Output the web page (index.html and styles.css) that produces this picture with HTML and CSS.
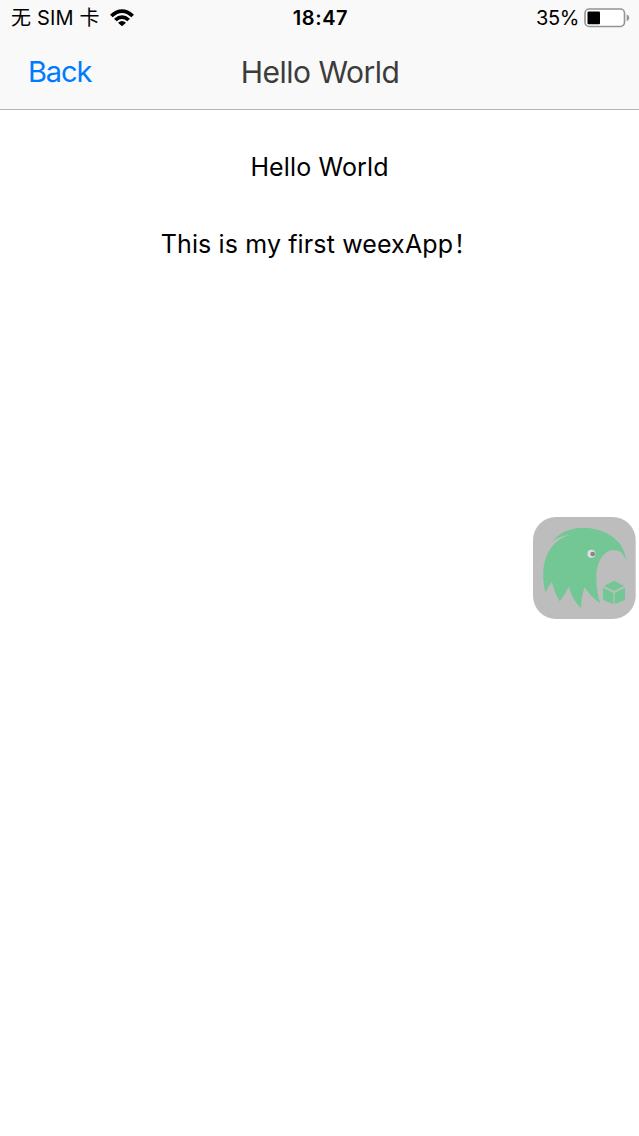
FILE: index.html
```html
<!DOCTYPE html>
<html lang="zh-CN">
<head>
<meta charset="utf-8">
<title>Hello World</title>
<link rel="stylesheet" href="styles.css">
</head>
<body>
<header class="header">
  <div class="status">
    <div class="status-left">
      <span class="carrier">无 SIM 卡</span>
      <svg class="wifi" viewBox="0 0 72 52">
        <path d="M0 17Q36-15 72 17L64 25Q36-1 8 25Z"/>
        <path d="M12 29Q36 8 60 29L52 37Q36 23 20 37Z"/>
        <path d="M24 41Q36 31 48 41L36 52Z"/>
      </svg>
    </div>
    <span class="clock">18:47</span>
    <div class="status-right">
      <span class="percent">35%</span>
      <svg class="battery" viewBox="0 0 46 20">
        <rect x="1" y="1" width="39.5" height="17.5" rx="4.2" fill="#fff" stroke="#939393" stroke-width="1.6"/>
        <rect x="3.5" y="3.5" width="12.5" height="12.8" rx="1" fill="#000"/>
        <path d="M42.7 6.4Q45.3 7.4 45.3 9.8T42.7 13.2Z" fill="#939393"/>
      </svg>
    </div>
  </div>
  <nav class="nav">
    <a class="back">Back</a>
    <h1 class="title">Hello World</h1>
  </nav>
</header>
<main class="content">
  <p class="greeting">Hello World</p>
  <p class="message">This is my first weexApp<span class="mark">！</span></p>
</main>
<svg class="float-button" viewBox="24 21 308 306">
  <rect x="24" y="21" width="308" height="306" rx="69" fill="#bdbdbd"/>
  <path fill="#72c795" d="M82 94Q101 69 134 60C171 47 224 54 260 79C284 96 301 120 302 149C294 128 283 120 266 120C231 122 212 164 214 207Q215 246 225 279Q197 261 179 232Q168 261 168 295Q143 270 131 230Q120 255 104 274Q89 250 81 215Q70 231 61 247C54 218 51 178 61 148C73 109 101 84 135 75Q107 76 82 94Z"/>
  <circle cx="199" cy="131" r="12" fill="#dedede"/>
  <circle cx="203" cy="132" r="7" fill="#858585"/>
  <path fill="#72c795" d="M267 212L297 228L267 243L237 228ZM234 233L265 248V283L237 271Q234 269 234 266ZM300 233V266Q300 269 297 271L269 283V248Z"/>
</svg>
</body>
</html>
```
FILE: styles.css
```css
* { box-sizing: border-box; }
body {
  margin: 0;
  min-height: 1136px;
  background: #fff;
  color: #000;
  font-family: Inter, "Noto Sans CJK SC", sans-serif;
}
.header {
  height: 110px;
  background: #f9f9f9;
  border-bottom: 1px solid #b5b5b5;
}
.status {
  display: grid;
  grid-template-columns: 1fr auto 1fr;
  align-items: center;
  height: 35px;
  padding: 0 9px 0 11px;
  font-size: 20px;
  line-height: 34px;
  white-space: nowrap;
}
.status-left, .status-right { display: flex; align-items: center; }
.status-left { gap: 10px; }
.status-right { justify-content: flex-end; gap: 5px; }
.carrier { padding-top: 1px; letter-spacing: 0.15px; }
.percent { padding-top: 1px; letter-spacing: -0.4px; }
.wifi { width: 24px; height: 17.3px; }
.clock { padding-top: 1px; font-weight: 600; letter-spacing: 0.6px; }
.battery { width: 46px; height: 20px; }
.nav {
  display: grid;
  grid-template-columns: 1fr auto 1fr;
  align-items: center;
  height: 74px;
  padding: 0 27px 0 28px;
}
.back {
  padding-bottom: 2px;
  color: #007aff;
  font-size: 29px;
  letter-spacing: -1.1px;
}
.title {
  margin: 0;
  color: #3c3c3c;
  font-size: 30px;
  font-weight: 400;
  letter-spacing: -0.5px;
}
.content { padding-top: 38px; text-align: center; }
.greeting, .message {
  margin: 0 0 39px;
  font-size: 25px;
  line-height: 38px;
  letter-spacing: 0.13px;
  white-space: nowrap;
}
.message { margin-top: -0.5px; }
.mark { font-family: "Noto Sans CJK SC", sans-serif; line-height: 1; }
.float-button {
  position: absolute;
  left: 533px;
  top: 517px;
  width: 102.7px;
  height: 102px;
}
```
